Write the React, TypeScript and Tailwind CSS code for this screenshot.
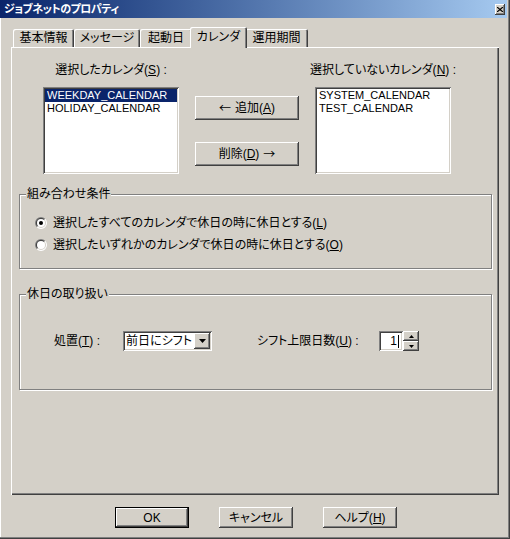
import React from "react";

const raised =
  "bg-[#d4d0c8] shadow-[inset_-1px_-1px_#404040,inset_1px_1px_#ffffff,inset_-2px_-2px_#808080,inset_2px_2px_#d4d0c8]";
const sunken =
  "bg-white shadow-[inset_1px_1px_#808080,inset_-1px_-1px_#ffffff,inset_2px_2px_#404040,inset_-2px_-2px_#d4d0c8]";
const etched =
  "border border-[#808080] shadow-[inset_1px_1px_#ffffff,1px_1px_#ffffff]";

function U({ children }: { children: React.ReactNode }) {
  return <span className="underline underline-offset-[1px]">{children}</span>;
}

function Arrow({ children }: { children: React.ReactNode }) {
  return (
    <span className="font-['Noto_Sans_CJK_JP',sans-serif] [font-feature-settings:normal]">
      {children}
    </span>
  );
}

function Radio({ checked }: { checked?: boolean }) {
  return (
    <svg width="12" height="12" viewBox="0 0 12 12" className="shrink-0">
      <path d="M1.757 10.243 A6 6 0 0 1 10.243 1.757 Z" fill="#808080" />
      <path d="M10.243 1.757 A6 6 0 0 1 1.757 10.243 Z" fill="#ffffff" />
      <path d="M2.464 9.536 A5 5 0 0 1 9.536 2.464 Z" fill="#404040" />
      <path d="M9.536 2.464 A5 5 0 0 1 2.464 9.536 Z" fill="#d4d0c8" />
      <circle cx="6" cy="6" r="4" fill="#ffffff" />
      {checked && <circle cx="6" cy="6" r="2" fill="#000000" />}
    </svg>
  );
}

function Tab({
  label,
  w,
  selected,
}: {
  label: string;
  w: string;
  selected?: boolean;
}) {
  if (selected) {
    return (
      <div
        className={`relative z-10 -mx-[2px] -mb-[1px] flex h-[21px] items-center justify-center rounded-t-[2px] bg-[#d4d0c8] pb-[1px] shadow-[inset_1px_1px_#ffffff,inset_-1px_0_#404040,inset_-2px_0_#808080] ${w}`}
      >
        {label}
      </div>
    );
  }
  return (
    <div
      className={`flex h-[18px] items-center justify-center rounded-t-[2px] bg-[#d4d0c8] shadow-[inset_1px_1px_#ffffff,inset_-1px_0_#404040,inset_-2px_0_#808080] ${w}`}
    >
      {label}
    </div>
  );
}

function Button({
  children,
  w,
  h,
  def,
}: {
  children: React.ReactNode;
  w: string;
  h: string;
  def?: boolean;
}) {
  return (
    <div
      className={`flex items-center justify-center ${w} ${h} ${
        def
          ? "bg-[#d4d0c8] shadow-[inset_0_0_0_1px_#000000,inset_-2px_-2px_#404040,inset_2px_2px_#ffffff,inset_-3px_-3px_#808080]"
          : raised
      }`}
    >
      {children}
    </div>
  );
}

export default function App() {
  return (
    <div className="relative h-[539px] w-[510px] overflow-hidden bg-[#d4d0c8] text-[12px] leading-[14px] text-black font-['Liberation_Sans','Noto_Sans_CJK_JP',sans-serif] [font-feature-settings:'palt'] shadow-[inset_-1px_-1px_#404040,inset_-2px_-2px_#808080,inset_1px_0_#ffffff]">
      {/* Title bar */}
      <div className="mr-[3px] flex h-[18px] items-center bg-gradient-to-r from-[#0a246a] to-[#a6caf0] pl-[4px] pr-[2px]">
        <span className="text-[11px] font-bold tracking-[-0.5px] text-white">
          ジョブネットのプロパティ
        </span>
        <div className={`ml-auto flex h-[11px] w-[10px] items-center justify-center ${raised}`}>
          <svg width="6" height="5" viewBox="0 0 6 5">
            <path d="M0 0 L6 5 M6 0 L0 5" stroke="#000" strokeWidth="1.2" />
          </svg>
        </div>
      </div>

      {/* Tabs */}
      <div className="ml-[13px] mt-[9px] flex h-[20px] items-end">
        <Tab label="基本情報" w="w-[61px]" />
        <Tab label="メッセージ" w="w-[66px]" />
        <Tab label="起動日" w="w-[52px]" />
        <Tab label="カレンダ" w="w-[57px]" selected />
        <Tab label="運用期間" w="w-[63px]" />
      </div>

      {/* Panel */}
      <div className="ml-[11px] flex h-[448px] w-[488px] flex-col pt-[16px] shadow-[inset_1px_1px_#ffffff,inset_-1px_-1px_#404040,inset_-2px_-2px_#808080]">
        <div className="flex pl-[32px]">
          <div className="flex w-[136px] flex-col items-center">
            <div className="h-[14px] whitespace-nowrap">
              選択したカレンダ(<U>S</U>) :
            </div>
            <div className={`mt-[10px] h-[87px] w-[136px] p-[2px] text-[11px] leading-[13px] ${sunken}`}>
              <div className="h-[13px] bg-[#0a246a] pl-[2px] text-white">WEEKDAY_CALENDAR</div>
              <div className="h-[13px] pl-[2px]">HOLIDAY_CALENDAR</div>
            </div>
          </div>
          <div className="ml-[16px] flex w-[104px] flex-col pt-[33px]">
            <Button w="w-[104px]" h="h-[24px]">
              <Arrow>←</Arrow>
              <span className="ml-[4px]">
                追加(<U>A</U>)
              </span>
            </Button>
            <div className="mt-[22px]">
              <Button w="w-[104px]" h="h-[24px]">
                <span className="mr-[4px]">
                  削除(<U>D</U>)
                </span>
                <Arrow>→</Arrow>
              </Button>
            </div>
          </div>
          <div className="ml-[16px] flex w-[136px] flex-col items-center">
            <div className="h-[14px] whitespace-nowrap">
              選択していないカレンダ(<U>N</U>) :
            </div>
            <div className={`mt-[10px] h-[87px] w-[136px] p-[2px] text-[11px] leading-[13px] ${sunken}`}>
              <div className="h-[13px] pl-[2px]">SYSTEM_CALENDAR</div>
              <div className="h-[13px] pl-[2px]">TEST_CALENDAR</div>
            </div>
          </div>
        </div>

        {/* Group 1 */}
        <fieldset className={`ml-[8px] mt-[14px] w-[473px] p-0 ${etched}`}>
          <legend className="ml-[6px] h-[12px] bg-[#d4d0c8] px-[1px] leading-[12px]">
            組み合わせ条件
          </legend>
          <div className="flex flex-col pb-[12px] pl-[15px] pt-[12px]">
            <div className="flex h-[22px] items-center gap-[6px]">
              <Radio checked />
              <span>選択したすべてのカレンダで休日の時に休日とする(<U>L</U>)</span>
            </div>
            <div className="flex h-[22px] items-center gap-[6px]">
              <Radio />
              <span>選択したいずれかのカレンダで休日の時に休日とする(<U>O</U>)</span>
            </div>
          </div>
        </fieldset>

        {/* Group 2 */}
        <fieldset className={`ml-[8px] mt-[19px] w-[473px] p-0 ${etched}`}>
          <legend className="ml-[6px] h-[12px] bg-[#d4d0c8] px-[1px] leading-[12px]">
            休日の取り扱い
          </legend>
          <div className="flex items-center pb-[38px] pl-[34px] pt-[31px]">
            <div className="w-[69px] whitespace-nowrap">
              処置(<U>T</U>) :
            </div>
            <div className={`flex h-[20px] w-[89px] items-center p-[2px] ${sunken}`}>
              <span className="flex-1 whitespace-nowrap pl-[1px]">前日にシフト</span>
              <div className={`flex h-[16px] w-[16px] items-center justify-center ${raised}`}>
                <svg width="7" height="4" viewBox="0 0 7 4">
                  <path d="M0 0 H7 L3.5 4 Z" fill="#000" />
                </svg>
              </div>
            </div>
            <div className="ml-[45px] w-[122px] whitespace-nowrap">
              シフト上限日数(<U>U</U>) :
            </div>
            <div className={`flex h-[20px] w-[24px] items-center justify-end pr-[4px] ${sunken}`}>
              <span>1</span>
              <span className="ml-[1px] h-[13px] w-[1px] bg-black" />
            </div>
            <div className="flex h-[20px] w-[16px] flex-col">
              <div className={`flex h-[10px] w-[16px] items-center justify-center ${raised}`}>
                <svg width="5" height="3" viewBox="0 0 5 3">
                  <path d="M2.5 0 L5 3 H0 Z" fill="#000" />
                </svg>
              </div>
              <div className={`flex h-[10px] w-[16px] items-center justify-center ${raised}`}>
                <svg width="5" height="3" viewBox="0 0 5 3">
                  <path d="M0 0 H5 L2.5 3 Z" fill="#000" />
                </svg>
              </div>
            </div>
          </div>
        </fieldset>
      </div>

      {/* Bottom buttons */}
      <div className="ml-[115px] mt-[12px] flex gap-[30px]">
        <Button w="w-[74px]" h="h-[21px]" def>
          OK
        </Button>
        <Button w="w-[74px]" h="h-[21px]">
          キャンセル
        </Button>
        <Button w="w-[74px]" h="h-[21px]">
          ヘルプ(<U>H</U>)
        </Button>
      </div>
    </div>
  );
}
